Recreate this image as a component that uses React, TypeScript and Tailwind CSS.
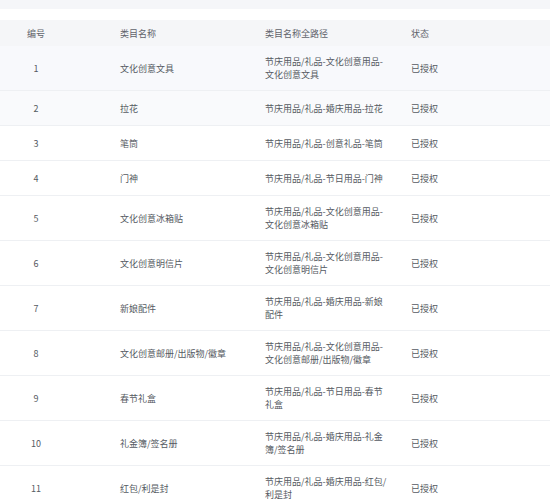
const rows = [
  { id: 1, name: "文化创意文具", path: "节庆用品/礼品-文化创意用品-文化创意文具", tall: true, bg: "bg-[#f8f9fc]" },
  { id: 2, name: "拉花", path: "节庆用品/礼品-婚庆用品-拉花", tall: false, bg: "bg-[#f9fafc]" },
  { id: 3, name: "笔筒", path: "节庆用品/礼品-创意礼品-笔筒", tall: false, bg: "bg-white" },
  { id: 4, name: "门神", path: "节庆用品/礼品-节日用品-门神", tall: false, bg: "bg-white" },
  { id: 5, name: "文化创意冰箱贴", path: "节庆用品/礼品-文化创意用品-文化创意冰箱贴", tall: true, bg: "bg-white" },
  { id: 6, name: "文化创意明信片", path: "节庆用品/礼品-文化创意用品-文化创意明信片", tall: true, bg: "bg-white" },
  { id: 7, name: "新娘配件", path: "节庆用品/礼品-婚庆用品-新娘配件", tall: true, bg: "bg-white" },
  { id: 8, name: "文化创意邮册/出版物/徽章", path: "节庆用品/礼品-文化创意用品-文化创意邮册/出版物/徽章", tall: true, bg: "bg-white" },
  { id: 9, name: "春节礼盒", path: "节庆用品/礼品-节日用品-春节礼盒", tall: true, bg: "bg-white" },
  { id: 10, name: "礼金簿/签名册", path: "节庆用品/礼品-婚庆用品-礼金簿/签名册", tall: true, bg: "bg-white" },
  { id: 11, name: "红包/利是封", path: "节庆用品/礼品-婚庆用品-红包/利是封", tall: true, bg: "bg-white" },
];

export default function App() {
  return (
    <div
      className="w-[550px] h-[499px] overflow-hidden bg-white text-[9px] leading-[13px] text-[#555a62]"
      style={{ fontFamily: '"Noto Sans CJK SC", "Noto Sans", sans-serif' }}
    >
      <div className="h-[9px] bg-[#f5f6f9]" />
      <div className="h-[11px]" />
      <div className="flex items-center h-[26px] bg-[#f5f6f8] text-[#5f636b]">
        <div className="w-[72px] text-center">编号</div>
        <div className="w-[48px]" />
        <div className="w-[145px]">类目名称</div>
        <div className="w-[146px]">类目名称全路径</div>
        <div className="flex-1">状态</div>
      </div>
      {rows.map((r) => (
        <div
          key={r.id}
          className={`flex items-center border-b border-[#eef0f3] ${r.bg} ${
            r.tall ? "h-[45px]" : "h-[35px]"
          }`}
        >
          <div className="w-[72px] text-center">{r.id}</div>
          <div className="w-[48px]" />
          <div className="w-[145px]">{r.name}</div>
          <div className="w-[146px]">
            <div className="w-[124px]">{r.path}</div>
          </div>
          <div className="flex-1">已授权</div>
        </div>
      ))}
    </div>
  );
}
